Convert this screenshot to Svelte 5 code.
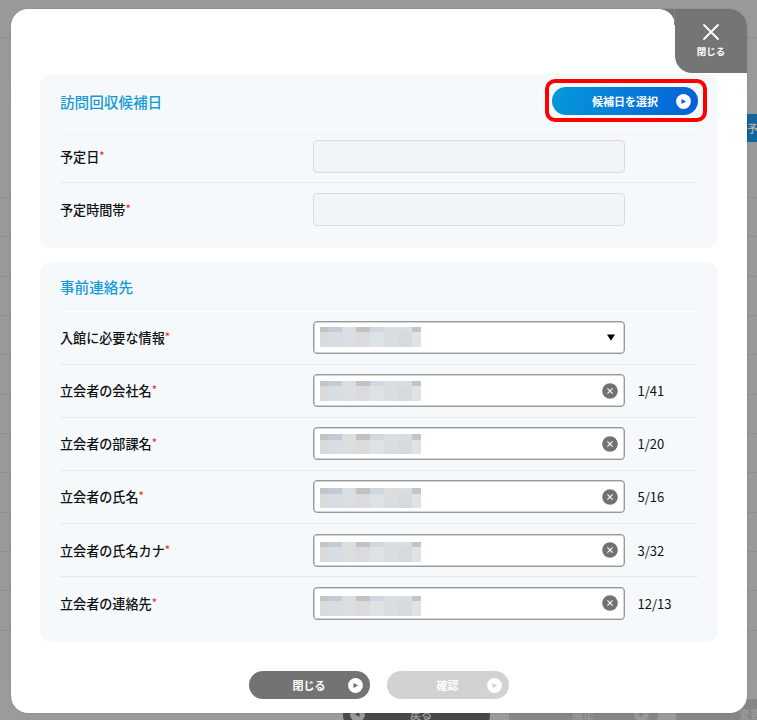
<script lang="ts">
  interface Field {
    label: string;
    kind: "select" | "text";
    count?: string;
  }

  const scheduleFields = ["予定日", "予定時間帯"];

  const contactFields: Field[] = [
    { label: "入館に必要な情報", kind: "select" },
    { label: "立会者の会社名", kind: "text", count: "1/41" },
    { label: "立会者の部課名", kind: "text", count: "1/20" },
    { label: "立会者の氏名", kind: "text", count: "5/16" },
    { label: "立会者の氏名カナ", kind: "text", count: "3/32" },
    { label: "立会者の連絡先", kind: "text", count: "12/13" },
  ];

  // masked value: widths plus the colours of the upper and lower cells
  const maskCells = [
    { width: 8, top: "#c4c4c2", bottom: "#d9dadb" },
    { width: 14, top: "#c5cbd5", bottom: "#d8dde4" },
    { width: 13.5, top: "#d9dee1", bottom: "#dadee1" },
    { width: 14.5, top: "#c3c2c0", bottom: "#dadbdd" },
    { width: 13.5, top: "#d0d7e0", bottom: "#dde2e5" },
    { width: 14.5, top: "#dadee1", bottom: "#d9dde0" },
    { width: 13.5, top: "#dadddf", bottom: "#d8d9dc" },
    { width: 9.5, top: "#c0c5cb", bottom: "#dee3e6" },
  ];

  const backdropRows = Array.from({ length: 11 }, (_, i) => i);
</script>

{#snippet arrow(color: string)}
  <svg class="arrow" width="15" height="15" viewBox="0 0 15 15">
    <circle cx="7.5" cy="7.5" r="7.4" fill="#fff" />
    <path d="M5.5 4.9v5.2L10 7.5z" fill={color} />
  </svg>
{/snippet}

<div class="screen">
  <div class="backdrop" aria-hidden="true">
    <div class="back-header"></div>
    <div class="back-gap"></div>
    <div class="back-strip"></div>
    <div class="back-blank"></div>
    {#each backdropRows as row (row)}
      <div class="back-row"></div>
    {/each}
    <div class="back-footer"></div>
    <span class="back-tab">予</span>
    <div class="back-button back-prev">
      <svg width="15" height="15" viewBox="0 0 15 15">
        <circle cx="7.5" cy="7.5" r="7.4" fill="#999" />
        <path d="M9.5 4.9v5.2L5 7.5z" fill="#494949" />
      </svg>
      <span>戻る</span>
    </div>
    <div class="back-button back-stop">
      <span>廃止</span>
      <svg width="15" height="15" viewBox="0 0 15 15">
        <circle cx="7.5" cy="7.5" r="7.4" fill="#999" />
        <path d="M5.5 4.9v5.2L10 7.5z" fill="#858585" />
      </svg>
    </div>
    <div class="back-button back-edit"><span>変更</span></div>
  </div>

  <div class="modal" role="dialog">
    <button class="corner-close">
      <svg width="18" height="18" viewBox="0 0 18 18">
        <path
          d="M2 2l14 14M16 2L2 16"
          stroke="#fff"
          stroke-width="1.8"
          stroke-linecap="round"
        />
      </svg>
      <span>閉じる</span>
    </button>

    <section class="panel schedule">
      <header class="panel-header">
        <h2>訪問回収候補日</h2>
        <div class="highlight">
          <button class="pill select-date">
            <span>候補日を選択</span>
            {@render arrow("#0560d5")}
          </button>
        </div>
      </header>
      {#each scheduleFields as label (label)}
        <div class="row">
          <div class="label">{label}<sup>*</sup></div>
          <div class="input disabled"></div>
        </div>
      {/each}
    </section>

    <section class="panel contact">
      <header class="panel-header">
        <h2>事前連絡先</h2>
      </header>
      {#each contactFields as field, i (field.label)}
        <div class="row">
          <div class="label">{field.label}<sup>*</sup></div>
          <div class="input">
            <div class="mask" style="margin-top: {4.7 + i * 0.65}px">
              {#each maskCells as cell}
                <div class="cell" style="width: {cell.width}px; background: {cell.bottom}">
                  <div class="cell-top" style="background: {cell.top}"></div>
                </div>
              {/each}
            </div>
            {#if field.kind === "select"}
              <svg class="caret" width="8" height="7" viewBox="0 0 8 7">
                <path d="M0 .5h8L4 6.7z" fill="#000" />
              </svg>
            {:else}
              <svg class="clear" width="16" height="16" viewBox="0 0 16 16">
                <circle cx="8" cy="8" r="7.8" fill="#727272" />
                <path d="M5.4 5.4l5.2 5.2M10.6 5.4l-5.2 5.2" stroke="#fff" stroke-width="1.1" />
              </svg>
            {/if}
          </div>
          {#if field.count}
            <span class="count">{field.count}</span>
          {/if}
        </div>
      {/each}
    </section>

    <footer class="actions">
      <button class="pill cancel">
        <span>閉じる</span>
        {@render arrow("#6b6b6b")}
      </button>
      <button class="pill confirm" disabled>
        <span>確認</span>
        {@render arrow("#cfcfcf")}
      </button>
    </footer>
  </div>
</div>

<style>
  :global(body) {
    margin: 0;
    overflow: hidden;
  }

  .screen {
    position: relative;
    width: 757px;
    height: 720px;
    box-sizing: border-box;
    padding: 9px 10px 0 11px;
    overflow: hidden;
    font-family: "Noto Sans CJK JP", sans-serif;
    color: #111;
  }

  .backdrop {
    position: absolute;
    inset: 0;
    overflow: hidden;
    background: #98999b;
  }

  .back-header {
    height: 37px;
    background: #9a9a9a;
    border-bottom: 1px solid #8f8f90;
  }

  .back-gap {
    height: 49px;
  }

  .back-strip {
    height: 13px;
    background: #9b9a99;
  }

  .back-blank {
    height: 97px;
    border-bottom: 1px solid #8e8f90;
  }

  .back-row {
    height: 38.35px;
    border-bottom: 1px solid #8e8f90;
  }

  .back-footer {
    position: absolute;
    left: 0;
    right: 0;
    top: 680px;
    bottom: 0;
    background: #9b9b9b;
  }

  .back-tab {
    position: absolute;
    left: 747px;
    top: 114px;
    width: 20px;
    height: 28px;
    background: #12649f;
    color: #aaa;
    font-size: 11px;
    font-weight: 700;
    line-height: 28px;
  }

  .back-button {
    position: absolute;
    top: 699px;
    height: 32px;
    box-sizing: border-box;
    border-radius: 16px;
    font-size: 11px;
    font-weight: 700;
    line-height: 32px;
    color: #999;
    background: #868686;
  }

  .back-button span,
  .back-button svg {
    position: absolute;
  }

  .back-button span {
    top: -1px;
  }

  .back-prev {
    left: 343px;
    width: 147px;
    background: #494949;
  }

  .back-prev svg {
    left: 7px;
    top: 8px;
  }

  .back-prev span {
    left: 67px;
  }

  .back-stop {
    left: 509px;
    width: 149px;
  }

  .back-stop span {
    left: 63px;
  }

  .back-stop svg {
    left: 125px;
    top: 8px;
  }

  .back-edit {
    left: 676px;
    width: 147px;
  }

  .back-edit span {
    left: 63px;
  }

  .modal {
    position: relative;
    height: 704px;
    box-sizing: border-box;
    padding: 65px 29px 0;
    background: #fff;
    border-radius: 17px;
    box-shadow: 0 0 2px rgba(0, 0, 0, 0.2);
  }

  button {
    border: 0;
    padding: 0;
    font-family: inherit;
    cursor: pointer;
  }

  .corner-close {
    position: absolute;
    top: 0;
    right: 0;
    width: 72px;
    height: 64px;
    padding-bottom: 1px;
    display: flex;
    flex-direction: column;
    align-items: center;
    justify-content: center;
    gap: 3px;
    background: #757575;
    border-radius: 0 17px 0 17px;
    color: #fff;
    font-size: 9.5px;
    font-weight: 700;
    line-height: 14px;
  }

  .corner-close::before {
    content: "";
    position: absolute;
    top: 0;
    left: -16px;
    width: 16px;
    height: 16px;
    border-right: 1px solid #858585;
    background: radial-gradient(circle at 0 100%, transparent 15.5px, #757575 16.2px);
    box-sizing: border-box;
  }

  .panel {
    box-sizing: border-box;
    width: 678px;
    padding: 0 20px;
    background: #f5f9fc;
    border-radius: 10px;
  }

  .schedule {
    height: 174px;
  }

  .contact {
    height: 380px;
    margin-top: 14px;
  }

  .panel-header {
    display: flex;
    justify-content: space-between;
    height: 56.3px;
    box-sizing: border-box;
    border-bottom: 1px solid #fff;
  }

  .contact .panel-header {
    height: 49.5px;
  }

  h2 {
    margin: 0;
    font-size: 14.6px;
    font-weight: 500;
    line-height: 55px;
    color: #169bd7;
  }

  .contact h2 {
    line-height: 49px;
  }

  .highlight {
    box-sizing: border-box;
    width: 162px;
    height: 43px;
    margin: 5px -9px 0 0;
    padding: 4px 3px;
    border: 4px solid #fe0000;
    border-radius: 10px;
  }

  .pill {
    position: relative;
    display: flex;
    align-items: center;
    justify-content: center;
    height: 28px;
    border-radius: 14px;
    color: #fff;
    font-size: 11px;
    font-weight: 700;
    line-height: 28px;
  }

  .pill .arrow {
    position: absolute;
    right: 7px;
  }

  .select-date {
    width: 146px;
    background: linear-gradient(100deg, #0698db, #0560d8);
  }

  .row {
    display: flex;
    align-items: center;
    height: 53.15px;
    box-sizing: border-box;
    border-bottom: 1px solid #e7ebee;
  }

  .row:last-child {
    border-bottom-color: transparent;
  }

  .label {
    width: 253px;
    flex-shrink: 0;
    padding-top: 1px;
    font-size: 13.1px;
    font-weight: 500;
    line-height: 20px;
  }

  sup {
    color: #fb2a1c;
    font-size: 11px;
    line-height: 0;
    vertical-align: 2px;
  }

  .input {
    display: flex;
    justify-content: space-between;
    box-sizing: border-box;
    width: 311.5px;
    height: 33px;
    flex-shrink: 0;
    padding: 0 6px;
    background: #fff;
    border: 1px solid #999;
    border-radius: 4px;
    box-shadow: inset 0 0 0 0.5px #aaa;
  }

  .input.disabled {
    background: #f2f5f8;
    border-color: #d9dbdc;
    box-shadow: none;
  }

  .mask {
    display: flex;
    height: 20px;
  }

  .cell-top {
    height: 5.5px;
  }

  .caret {
    align-self: center;
    margin-right: 3px;
  }

  .clear {
    align-self: center;
  }

  .count {
    margin-left: 13px;
    padding-top: 1px;
    font-size: 13px;
    line-height: 20px;
  }

  .actions {
    display: flex;
    justify-content: center;
    gap: 17px;
    padding: 29px 1px 0 0;
  }

  .cancel {
    width: 121px;
    background: #737373;
  }

  .confirm {
    width: 122px;
    background: #d2d2d2;
  }
</style>
